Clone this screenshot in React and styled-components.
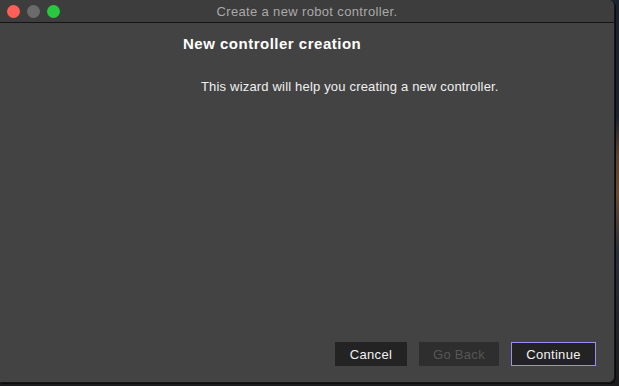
import React from 'react';
import styled, { createGlobalStyle } from 'styled-components';

const GlobalStyle = createGlobalStyle`
  html, body {
    margin: 0;
    padding: 0;
    width: 619px;
    height: 386px;
    overflow: hidden;
    background: linear-gradient(180deg, #1b2230 0%, #1b2230 30%, #5b4130 40%, #6a4a32 50%, #2a2f3c 65%, #1c1c1e 100%);
    font-family: "Liberation Sans", Arial, sans-serif;
  }
`;

const Desktop = styled.div`
  width: 619px;
  height: 386px;
  display: flex;
  align-items: flex-start;
`;

const Window = styled.div`
  width: 614px;
  height: 382px;
  background: #434343;
  border: 1px solid #161616;
  border-top: none;
  border-left: none;
  border-radius: 0 6px 6px 0;
  box-shadow: 1px 1px 0 #0c0c0c;
  display: flex;
  flex-direction: column;
  overflow: hidden;
`;

const TitleBar = styled.div`
  height: 22px;
  flex: none;
  background: #3d3d3d;
  border-bottom: 1px solid #141414;
  display: flex;
  align-items: center;
`;

const Lights = styled.div`
  display: flex;
  gap: 7px;
  padding-left: 7px;
`;

const Light = styled.span`
  width: 13px;
  height: 13px;
  border-radius: 50%;
  background: ${p => p.$color};
`;

const Title = styled.div`
  flex: 1;
  text-align: center;
  color: #a9a9a9;
  font-size: 13px;
  letter-spacing: 0.35px;
  margin-right: 60px;
  margin-top: 1px;
`;

const Content = styled.div`
  flex: 1;
  display: flex;
  flex-direction: column;
  padding: 12px 0 0 183px;
`;

const Heading = styled.h1`
  margin: 0;
  color: #ffffff;
  font-size: 15px;
  font-weight: bold;
  letter-spacing: 0.5px;
  line-height: 18px;
`;

const Intro = styled.p`
  margin: 26px 0 0 18px;
  color: #f0f0f0;
  font-size: 13px;
  letter-spacing: 0.18px;
  line-height: 16px;
`;

const Footer = styled.div`
  flex: none;
  display: flex;
  justify-content: flex-end;
  gap: 12px;
  padding: 0 18px 16px 0;
`;

const Button = styled.button`
  height: 24px;
  width: ${p => p.$width}px;
  box-sizing: border-box;
  background: ${p => (p.disabled ? '#2e2e2e' : '#232323')};
  color: ${p => (p.disabled ? '#575757' : '#f2f2f2')};
  border: 1px solid ${p => (p.$primary ? '#9f8cf2' : 'transparent')};
  font-family: "Liberation Sans", Arial, sans-serif;
  font-size: 13px;
  letter-spacing: 0.3px;
  padding: 0;
`;

export default function App() {
  return (
    <>
      <GlobalStyle />
      <Desktop>
        <Window>
          <TitleBar>
            <Lights>
              <Light $color="#fe5f57" />
              <Light $color="#6b6b6b" />
              <Light $color="#28c840" />
            </Lights>
            <Title>Create a new robot controller.</Title>
          </TitleBar>
          <Content>
            <Heading>New controller creation</Heading>
            <Intro>This wizard will help you creating a new controller.</Intro>
          </Content>
          <Footer>
            <Button $width={72}>Cancel</Button>
            <Button $width={80} disabled>Go Back</Button>
            <Button $width={85} $primary>Continue</Button>
          </Footer>
        </Window>
      </Desktop>
    </>
  );
}
